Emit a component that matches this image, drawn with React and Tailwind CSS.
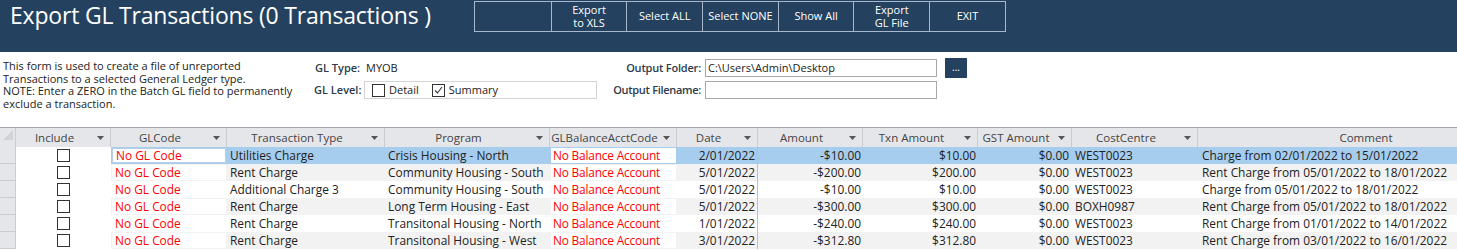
import React from "react";

const cols = [
  { label: "Include", w: "w-[95px]" },
  { label: "GLCode", w: "w-[116px]" },
  { label: "Transaction Type", w: "w-[158px]" },
  { label: "Program", w: "w-[165px]" },
  { label: "GLBalanceAcctCode", w: "w-[127px]" },
  { label: "Date", w: "w-[81px]" },
  { label: "Amount", w: "w-[105px]" },
  { label: "Txn Amount", w: "w-[115px]" },
  { label: "GST Amount", w: "w-[94px]" },
  { label: "CostCentre", w: "w-[126px]" },
  { label: "Comment", w: "w-[337px]", noArrow: true },
];

const rows = [
  ["Utilities Charge", "Crisis Housing - North", "2/01/2022", "-$10.00", "$10.00", "$0.00", "WEST0023", "Charge from 02/01/2022 to 15/01/2022"],
  ["Rent Charge", "Community Housing - South", "5/01/2022", "-$200.00", "$200.00", "$0.00", "WEST0023", "Rent Charge from 05/01/2022 to 18/01/2022"],
  ["Additional Charge 3", "Community Housing - South", "5/01/2022", "-$10.00", "$10.00", "$0.00", "WEST0023", "Charge from 05/01/2022 to 18/01/2022"],
  ["Rent Charge", "Long Term Housing - East", "5/01/2022", "-$300.00", "$300.00", "$0.00", "BOXH0987", "Rent Charge from 05/01/2022 to 18/01/2022"],
  ["Rent Charge", "Transitonal Housing - North", "1/01/2022", "-$240.00", "$240.00", "$0.00", "WEST0023", "Rent Charge from 01/01/2022 to 14/01/2022"],
  ["Rent Charge", "Transitonal Housing - West", "3/01/2022", "-$312.80", "$312.80", "$0.00", "WEST0023", "Rent Charge from 03/01/2022 to 16/01/2022"],
];

const buttons = [[""], ["Export", "to XLS"], ["Select ALL"], ["Select NONE"], ["Show All"], ["Export", "GL File"], ["EXIT"]];

function Arrow() {
  return (
    <span className="w-[14px] mr-[3px] flex justify-center items-center shrink-0">
      <svg width="7" height="4" viewBox="0 0 7 4"><path d="M0 0H7L3.5 4Z" fill="#555" /></svg>
    </span>
  );
}

function Box({ checked }) {
  return (
    <span className="w-[13px] h-[13px] border border-[#333] bg-white flex items-center justify-center shrink-0">
      {checked && (
        <svg width="9" height="8" viewBox="0 0 9 8"><path d="M1 4.5L3.5 7L8 1" stroke="#333" strokeWidth="1.1" fill="none" /></svg>
      )}
    </span>
  );
}

export default function App() {
  return (
    <div className="w-[1457px] h-[250px] overflow-hidden bg-white font-['Open_Sans','Noto_Sans',sans-serif] text-[#222]">
      {/* Header */}
      <div className="h-[52px] bg-[#24425f] flex items-start">
        <div className="w-[474px] pl-[10px] text-white text-[23px] leading-[30px] whitespace-nowrap tracking-[-0.2px]">
          Export GL Transactions (0 Transactions )
        </div>
        <div className="mt-[1px] flex border border-[#a8b8cc] h-[31px]">
          {buttons.map((b, i) => (
            <div
              key={i}
              className={`w-[75.7px] flex flex-col items-center justify-center text-white text-[11px] leading-[12.6px] ${i > 0 ? "border-l border-[#a8b8cc]" : ""}`}
            >
              {b.map((t, j) => (
                <span key={j}>{t}</span>
              ))}
            </div>
          ))}
        </div>
      </div>

      {/* Form */}
      <div className="h-[75px] flex">
        <div className="w-[314px] pl-[3px] pt-[8px] text-[11px] leading-[12.5px] text-[#222]">
          <div>This form is used to create a file of unreported</div>
          <div>Transactions to a selected General Ledger type.</div>
          <div>NOTE: Enter a ZERO in the Batch GL field to permanently</div>
          <div>exclude a transaction.</div>
        </div>
        <div className="w-[297px] pt-[7px] flex flex-col gap-[4px] text-[11px]">
          <div className="h-[18px] flex items-center">
            <span className="w-[52px] pl-[1px] font-semibold text-[#2d3b4b]">GL Type:</span>
            <span>MYOB</span>
          </div>
          <div className="h-[18px] flex items-center">
            <span className="w-[50px] font-semibold text-[#2d3b4b]">GL Level:</span>
            <div className="w-[233px] h-[18px] border border-[#d4d4d4] flex items-center pl-[7px]">
              <Box />
              <span className="ml-[4px]">Detail</span>
              <span className="ml-[13px]"><Box checked /></span>
              <span className="ml-[4px]">Summary</span>
            </div>
          </div>
        </div>
        <div className="pt-[7px] flex flex-col gap-[4px] text-[11px]">
          <div className="h-[18px] flex items-center">
            <span className="w-[90px] text-right font-semibold text-[#2d3b4b] tracking-[-0.2px]">Output Folder:</span>
            <div className="ml-[4px] w-[232px] h-[18px] border border-[#a8a8a8] flex items-center pl-[2px]">C:\Users\Admin\Desktop</div>
            <div className="ml-[8px] w-[22px] h-[20px] bg-[#24425f] text-white text-[10px] leading-none flex items-center justify-center pb-[2px]">...</div>
          </div>
          <div className="h-[18px] flex items-center">
            <span className="w-[90px] text-right font-semibold text-[#2d3b4b] whitespace-nowrap tracking-[-0.3px]">Output Filename:</span>
            <div className="ml-[4px] w-[232px] h-[18px] border border-[#a8a8a8]" />
          </div>
        </div>
      </div>

      {/* Table */}
      <div className="border-t border-[#a3a7ad]">
        <div className="h-[19px] flex bg-[#e4e6ea] text-[#444] text-[11.5px] whitespace-nowrap">
          <div className="w-[16px] shrink-0 border-r border-[#c9ccd1] flex items-start justify-end pt-[2px] pr-[2px]">
            <svg width="10" height="10" viewBox="0 0 10 10"><path d="M10 0V10H0Z" fill="#d0d3d8" /></svg>
          </div>
          {cols.map((c, i) => (
            <div key={i} className={`${c.w} shrink-0 flex items-center border-r border-[#c9ccd1]`}>
              <span className="flex-1 text-center overflow-hidden">{c.label}</span>
              {!c.noArrow && <Arrow />}
            </div>
          ))}
        </div>
        {rows.map((r, i) => {
          const sel = i === 0;
          const bg = sel ? "bg-[#a6cdee]" : i % 2 === 1 ? "bg-[#f2f2f2]" : "bg-white";
          return (
            <div key={i} className={`h-[17px] flex whitespace-nowrap text-[11.9px] ${bg}`}>
              <div className="w-[16px] shrink-0 bg-[#e4e6ea] border-r border-b border-[#c9ccd1]" />
              <div className="w-[95px] shrink-0 bg-white flex items-center justify-center">
                <Box />
              </div>
              <div className="w-[116px] shrink-0 p-[1px]">
                <div className={`h-full bg-white text-[#ff0000] flex items-center pl-[3px] ${sel ? "border border-[#b9cde3] pl-[2px]" : ""}`}>No GL Code</div>
              </div>
              <div className="w-[158px] shrink-0 flex items-center pl-[3px]">{r[0]}</div>
              <div className="w-[165px] shrink-0 flex items-center pl-[3px]">{r[1]}</div>
              <div className="w-[127px] shrink-0 p-[1px]">
                <div className="h-full bg-white text-[#ff0000] flex items-center pl-[2px] tracking-[-0.2px]">No Balance Account</div>
              </div>
              <div className="w-[81px] shrink-0 flex items-center justify-end pr-[2px] border-r border-[#c0c0c0]">{r[2]}</div>
              <div className="w-[105px] shrink-0 flex items-center justify-end pr-[2px]">{r[3]}</div>
              <div className="w-[115px] shrink-0 flex items-center justify-end pr-[2px]">{r[4]}</div>
              <div className="w-[94px] shrink-0 flex items-center justify-end pr-[3px]">{r[5]}</div>
              <div className="w-[126px] shrink-0 flex items-center pl-[3px]">{r[6]}</div>
              <div className="w-[337px] shrink-0 flex items-center pl-[4px]">{r[7]}</div>
            </div>
          );
        })}
      </div>
    </div>
  );
}
